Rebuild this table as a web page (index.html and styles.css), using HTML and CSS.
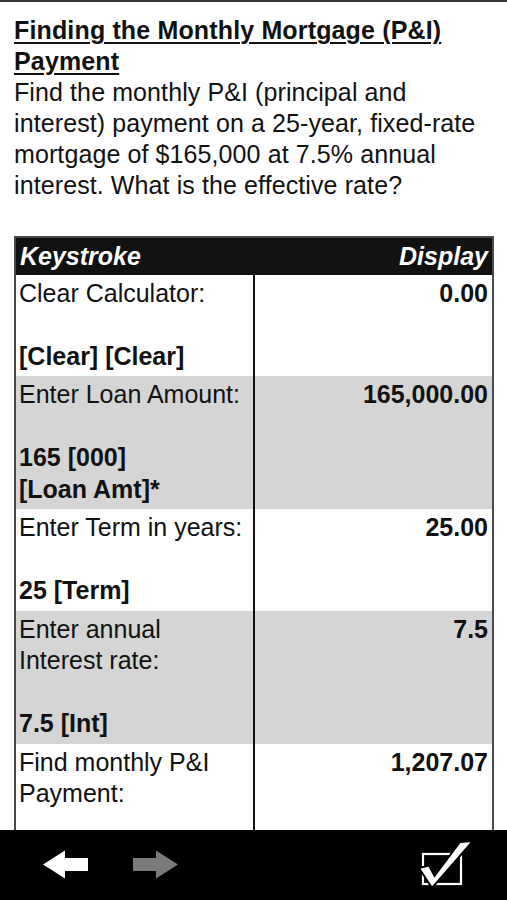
FILE: index.html
```html
<!DOCTYPE html>
<html lang="en">
<head>
<meta charset="utf-8">
<title>Finding the Monthly Mortgage (P&amp;I) Payment</title>
<link rel="stylesheet" href="styles.css">
</head>
<body>
<main class="page">
  <h1 class="title">Finding the Monthly Mortgage (P&amp;I) Payment</h1>
  <p class="intro">Find the monthly P&amp;I (principal and interest) payment on a 25-year, fixed-rate mortgage of $165,000 at 7.5% annual interest. What is the effective rate?</p>
  <table class="steps">
    <thead>
      <tr><th class="key-h">Keystroke</th><th class="disp-h">Display</th></tr>
    </thead>
    <tbody>
      <tr>
        <td class="key"><div>Clear Calculator:</div><div class="keys">[Clear] [Clear]</div></td>
        <td class="disp">0.00</td>
      </tr>
      <tr class="shade">
        <td class="key"><div>Enter Loan Amount:</div><div class="keys">165 [000]<br>[Loan Amt]*</div></td>
        <td class="disp">165,000.00</td>
      </tr>
      <tr>
        <td class="key"><div>Enter Term in years:</div><div class="keys">25 [Term]</div></td>
        <td class="disp">25.00</td>
      </tr>
      <tr class="shade">
        <td class="key"><div>Enter annual Interest rate:</div><div class="keys">7.5 [Int]</div></td>
        <td class="disp">7.5</td>
      </tr>
      <tr>
        <td class="key last"><div>Find monthly P&amp;I Payment:</div></td>
        <td class="disp">1,207.07</td>
      </tr>
    </tbody>
  </table>
</main>
<nav class="toolbar">
  <svg class="arrow" width="46" height="30" viewBox="0 0 46 30" aria-label="Back">
    <path d="M0 14.5 L22 0.5 L22 8 L45 8 L45 21 L22 21 L22 28.5 Z" fill="#fff"/>
  </svg>
  <svg class="arrow" width="46" height="30" viewBox="0 0 46 30" aria-label="Forward">
    <path d="M45 14.5 L23 0.5 L23 8 L0 8 L0 21 L23 21 L23 28.5 Z" fill="#7a7a7a"/>
  </svg>
  <svg class="check" width="60" height="52" viewBox="0 0 60 52" aria-label="Done">
    <rect x="7" y="15" width="38" height="30" fill="none" stroke="#fff" stroke-width="2.2"/>
    <path d="M3 29 L13 26.5 L18.5 37 L44 3 L57 2 L16 49 Z" fill="#fff" stroke="#000" stroke-width="2" stroke-linejoin="miter"/>
  </svg>
</nav>
</body>
</html>
```
FILE: styles.css
```css
* { box-sizing: border-box; }
html, body {
  margin: 0;
  padding: 0;
  height: 900px;
  background: #fff;
}
body {
  display: flex;
  flex-direction: column;
  overflow: hidden;
  font-family: "Liberation Sans", Arial, sans-serif;
  color: #111;
}
.page {
  flex: 1;
  overflow: hidden;
  border-top: 2px solid #333;
  padding: 13px 13px 0 14px;
}
.title {
  margin: 0;
  font-size: 25px;
  line-height: 31px;
  font-weight: bold;
  letter-spacing: 0.15px;
  text-decoration: underline;
  text-decoration-thickness: 2px;
  text-underline-offset: 3px;
}
.intro {
  margin: 0;
  font-size: 25px;
  line-height: 31px;
  letter-spacing: 0.1px;
}
.steps {
  margin-top: 35px;
  width: 480px;
  border-collapse: collapse;
  border: 2px solid #4a4a4a;
  font-size: 25px;
  line-height: 31.5px;
}
.steps th {
  background: #111;
  color: #fff;
  font-style: italic;
  font-weight: bold;
  padding: 3px 4px 2px 4px;
}
.key-h { text-align: left; }
.disp-h { text-align: right; }
.steps td {
  vertical-align: top;
  padding: 3px 4px 4px 3px;
}
.key {
  width: 239px;
  border-right: 2px solid #111;
}
.last { height: 140px; }
.keys {
  margin-top: 31.5px;
  font-weight: bold;
}
.disp {
  text-align: right;
  font-weight: bold;
}
.shade td { background: #d5d5d5; }
.toolbar {
  height: 70px;
  flex: none;
  background: #000;
  display: flex;
  align-items: center;
  padding: 0 31px 0 43px;
  gap: 44px;
}
.check { margin-left: auto; }
```
